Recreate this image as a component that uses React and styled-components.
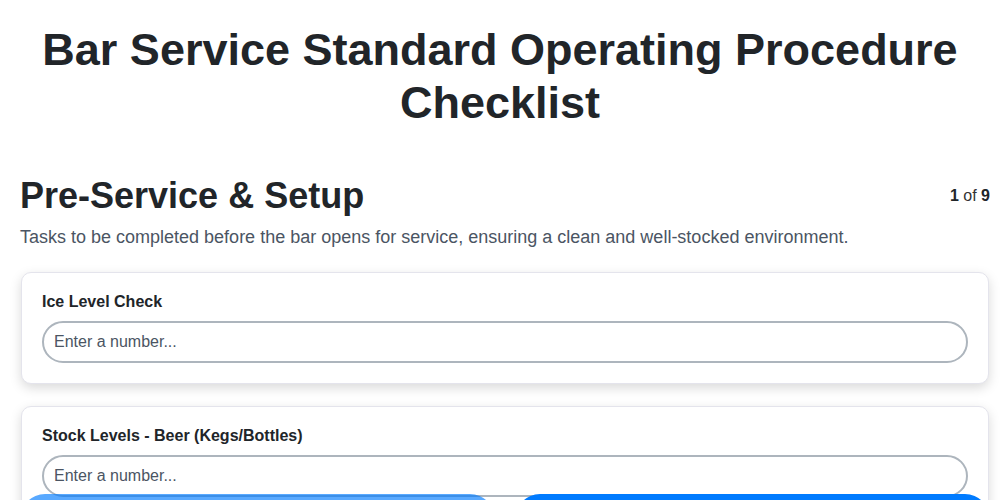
import React from "react";
import styled, { createGlobalStyle } from "styled-components";

const GlobalStyle = createGlobalStyle`
  * { box-sizing: border-box; }
  html, body {
    margin: 0;
    padding: 0;
    background: #ffffff;
    font-family: "Liberation Sans", Arial, Helvetica, sans-serif;
    color: #212529;
  }
`;

const Page = styled.div`
  padding-bottom: 80px;
`;

const Title = styled.h1`
  margin: 23px 0 0;
  font-size: 45px;
  line-height: 53px;
  font-weight: 700;
  text-align: center;
  color: #212529;
`;

const Section = styled.section`
  padding: 0 10px 0 20px;
  margin-top: 45px;
`;

const SectionHeader = styled.div`
  display: flex;
  align-items: center;
  justify-content: space-between;
`;

const SectionTitle = styled.h2`
  margin: 0;
  font-size: 36px;
  line-height: 43px;
  font-weight: 700;
  color: #212529;
`;

const Counter = styled.div`
  font-size: 16px;
  color: #333;
  b { font-weight: 700; color: #212529; }
`;

const Description = styled.p`
  margin: 10px 0 25px;
  font-size: 18px;
  line-height: 20px;
  color: #4b5563;
`;

const Card = styled.div`
  background: #fff;
  border: 1px solid #e4e4ec;
  border-radius: 10px;
  padding: 20px;
  margin: 0 1px 22px 1px;
  box-shadow: 0 4px 12px rgba(0, 0, 0, 0.15);
`;

const Label = styled.label`
  display: block;
  font-size: 16px;
  line-height: 18px;
  font-weight: 700;
  color: #212529;
  margin-bottom: 10px;
`;

const NumberInput = styled.input`
  display: block;
  width: 100%;
  height: 42px;
  padding: 10px;
  border: 2px solid #adb5bd;
  border-radius: 21px;
  font-family: inherit;
  font-size: 16px;
  color: #212529;
  background: #fff;
  outline: none;
  &::placeholder { color: #4b5563; }
`;

const Nav = styled.nav`
  position: fixed;
  left: 20px;
  right: 10px;
  top: 494px;
  display: grid;
  grid-template-columns: 1fr 1fr;
  gap: 20px;
`;

const NavButton = styled.button`
  height: 50px;
  border: none;
  border-radius: 25px;
  background: #007bff;
  color: #fff;
  font-family: inherit;
  font-size: 16px;
  font-weight: 700;
  opacity: ${(p) => (p.disabled ? 0.65 : 1)};
`;

const tasks = ["Ice Level Check", "Stock Levels - Beer (Kegs/Bottles)"];

export default function App() {
  return (
    <>
      <GlobalStyle />
      <Page>
        <Title>Bar Service Standard Operating Procedure Checklist</Title>
        <Section>
          <SectionHeader>
            <SectionTitle>Pre-Service &amp; Setup</SectionTitle>
            <Counter>
              <b>1</b> of <b>9</b>
            </Counter>
          </SectionHeader>
          <Description>
            Tasks to be completed before the bar opens for service, ensuring a clean and well-stocked environment.
          </Description>
          {tasks.map((t) => (
            <Card key={t}>
              <Label>{t}</Label>
              <NumberInput type="number" placeholder="Enter a number..." />
            </Card>
          ))}
        </Section>
        <Nav>
          <NavButton disabled>Previous</NavButton>
          <NavButton>Next</NavButton>
        </Nav>
      </Page>
    </>
  );
}
